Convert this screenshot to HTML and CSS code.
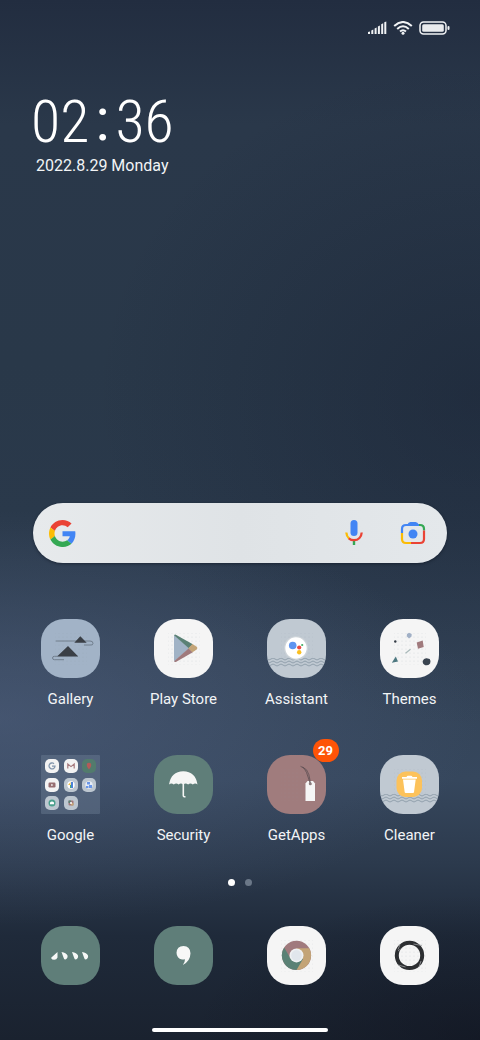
FILE: index.html
```
<!DOCTYPE html>
<html lang="en">
<head>
  <meta charset="UTF-8">
  <meta name="viewport" content="width=device-width, initial-scale=1">
  <title>Home Screen</title>
  <link rel="stylesheet" href="styles.css">
</head>
<body>

  <!-- shared patterns -->
  <svg class="defs" width="0" height="0" aria-hidden="true">
    <defs>
      <pattern id="dots" width="4" height="4" patternUnits="userSpaceOnUse">
        <circle cx="2" cy="2" r=".5" fill="#8d949c" opacity=".35"/>
      </pattern>
      <symbol id="waves" viewBox="0 0 59 10">
        <g fill="none" stroke="#8697a3" stroke-width=".8">
          <path d="M0 1q2 2 4 0t4 0 4 0 4 0 4 0 4 0 4 0 4 0 4 0 4 0 4 0 4 0 4 0 4 0 4 0"/>
          <path d="M0 4q2 2 4 0t4 0 4 0 4 0 4 0 4 0 4 0 4 0 4 0 4 0 4 0 4 0 4 0 4 0 4 0"/>
          <path d="M0 7q2 2 4 0t4 0 4 0 4 0 4 0 4 0 4 0 4 0 4 0 4 0 4 0 4 0 4 0 4 0 4 0"/>
        </g>
      </symbol>
    </defs>
  </svg>

  <div class="screen">
    <header class="status-bar">
      <svg width="19" height="14" viewBox="0 0 19 14" fill="#f1f3f5">
        <path d="M0 13v-2l2-.6V13zM3.300 13V9.500l2-.9V13zM6.600 13V7.600l2-1V13zM9.900 13V5.500l2-1V13zM13.200 13V3.200l2-1V13zM16.300 13V1.200l2-.7V13z"/>
      </svg>
      <svg width="20" height="14" viewBox="0 0 20 14" fill="none" stroke="#f1f3f5" stroke-width="2">
        <path d="M1.200 5Q10-3 18.800 5M4.200 8Q10 2.600 15.800 8M7 10.600q3-2.600 6 0"/>
        <circle cx="10" cy="12.300" r="1.500" fill="#f1f3f5" stroke="none"/>
      </svg>
      <svg width="31" height="14" viewBox="0 0 31 14">
        <rect x="1" y="1" width="26" height="12" rx="3.500" fill="none" stroke="#f1f3f5" stroke-width="1.500"/>
        <rect x="3.200" y="3.200" width="21.600" height="7.600" rx="1.500" fill="#e9ebed"/>
        <rect x="28.500" y="5" width="2" height="4" rx="1" fill="#f1f3f5"/>
      </svg>
    </header>

    <section class="clock">
      <div class="time"><span>02</span><span class="colon">:</span><span>36</span></div>
      <div class="date">2022.8.29 Monday</div>
    </section>

    <form class="search">
      <svg width="27" height="27" viewBox="2 2 44 44">
        <path fill="#ea4335" d="M24 9.500c3.540 0 6.710 1.220 9.210 3.600l6.850-6.850C35.900 2.380 30.470 0 24 0 14.620 0 6.510 5.380 2.560 13.220l7.980 6.190C12.430 13.720 17.740 9.500 24 9.500z" transform="translate(2 2) scale(.917)"/>
        <path fill="#4285f4" d="M46.980 24.550c0-1.570-.15-3.090-.38-4.550H24v9.020h12.940c-.58 2.960-2.260 5.480-4.780 7.180l7.730 6c4.510-4.180 7.090-10.360 7.090-17.650z" transform="translate(2 2) scale(.917)"/>
        <path fill="#fbbc05" d="M10.530 28.590c-.48-1.450-.76-2.990-.76-4.590s.27-3.140.76-4.590l-7.980-6.190C.92 16.460 0 20.120 0 24s.92 7.540 2.560 10.780z" transform="translate(2 2) scale(.917)"/>
        <path fill="#34a853" d="M24 48c6.480 0 11.930-2.130 15.890-5.810l-7.730-6c-2.150 1.450-4.920 2.300-8.160 2.300-6.260 0-11.570-4.220-13.470-9.910l-7.980 6.190C6.510 42.620 14.620 48 24 48z" transform="translate(2 2) scale(.917)"/>
      </svg>
      <input type="text" aria-label="Search">
      <button type="button" aria-label="Voice search">
        <svg width="18" height="26" viewBox="0 0 18 26">
          <rect x="5.500" y="0" width="7" height="16" rx="3.500" fill="#4285f4"/>
          <rect x="7.800" y="20" width="2.400" height="5" fill="#34a853"/>
          <path d="M1.300 12.500q.3 3.900 2.800 6" fill="none" stroke="#fbbc05" stroke-width="2.300"/>
          <path d="M3.800 18.300Q6 20.200 9 20.200c4.500 0 7.400-3.200 7.700-7.700" fill="none" stroke="#ea4335" stroke-width="2.300"/>
        </svg>
      </button>
      <button type="button" class="lens" aria-label="Camera search">
        <svg width="26" height="24" viewBox="0 0 26 24" fill="none" stroke-width="2.200">
          <path d="M2 12V8q0-4 4-4h14" stroke="#4285f4"/>
          <path d="M7 4Q8.500 1 10.500 1h5Q17.500 1 19 4z" fill="#4285f4"/>
          <path d="M19 4h1q4 0 4 4v1.500" stroke="#34a853"/>
          <path d="M24 9.500V18q0 4-4 4H11" stroke="#ea4335"/>
          <path d="M11 22H6q-4 0-4-4v-6" stroke="#fbbc05"/>
          <circle cx="13" cy="13" r="4.500" fill="#4285f4"/>
        </svg>
      </button>
    </form>

    <main class="apps">
      <a class="app" href="#">
        <svg class="icon blue" viewBox="0 0 59 59">
          <rect x="14" y="14" width="32" height="32" fill="url(#dots)"/>
          <path d="M14.700 22H49q3 0 3 2.300T49 26h-6M37 37.300H13.500q-2 0-2 1.700t2 1.700H23" fill="none" stroke="#64717f" stroke-width=".8"/>
          <path d="M27 27 16.300 37.300H37zM39.300 17.300l-6 6.400h12.400z" fill="#3a3f46"/>
        </svg>
        <span>Gallery</span>
      </a>
      <a class="app" href="#">
        <svg class="icon white" viewBox="0 0 59 59">
          <rect x="14" y="14" width="32" height="32" fill="url(#dots)"/>
          <path d="M20 16v26.500l15.500-13.300z" fill="#a1b3c6"/>
          <path d="M20 16.300q.8-1.200 2.300-.4l16.500 9.300-4 4z" fill="#5a8175"/>
          <path d="M20 42.300q.8 1.200 2.300.4l16.500-9.500-4-4z" fill="#a07a7d"/>
          <path d="m38.500 25 4.200 2.700q1.500 1.300 0 2.800l-4.200 2.800-4.200-4.100z" fill="#c3a477"/>
        </svg>
        <span>Play Store</span>
      </a>
      <a class="app" href="#">
        <svg class="icon gray" viewBox="0 0 59 59">
          <rect x="14" y="14" width="32" height="32" fill="url(#dots)"/>
          <use href="#waves" x="0" y="39" width="59" height="10"/>
          <circle cx="29" cy="29" r="12" fill="#d5dade" opacity=".6"/>
          <circle cx="29" cy="29" r="10.700" fill="#fff"/>
          <circle cx="25.700" cy="26.500" r="3.800" fill="#5d94f1"/>
          <circle cx="32.200" cy="28.500" r="2.100" fill="#ea4a40"/>
          <circle cx="35.200" cy="26" r="1.100" fill="#3fae63"/>
          <circle cx="32.200" cy="33.200" r="2.200" fill="#fbbf20"/>
        </svg>
        <span>Assistant</span>
      </a>
      <a class="app" href="#">
        <svg class="icon white" viewBox="0 0 59 59">
          <rect x="14" y="14" width="32" height="32" fill="url(#dots)"/>
          <path d="m29 13.700 2.700 1.300-.2 2.500-2.500 2-2.300-2.200.3-2.300z" fill="#a1b0c6"/>
          <circle cx="15.300" cy="22.500" r="1.200" fill="#343c46"/>
          <path d="m36.700 23.500 6-2 1 6.500-5.700 1.700z" fill="#a07a7d"/>
          <path d="m25.500 34.300 5-4" stroke="#a9b9b9" stroke-width="1.200"/>
          <path d="m15.800 37.500-4 6.200 6.200-1.200z" fill="#4d7880"/>
          <path d="M42.700 42q1-3 4-2.700l3 .8q1.500 2 .4 4.300-2 2.500-4.800 1.800-2.800-1-2.600-4.200z" fill="#3a4450"/>
        </svg>
        <span>Themes</span>
      </a>

      <a class="app" href="#">
        <svg class="icon folder" viewBox="0 0 59 59">
          <g fill="#f3f3f3">
            <rect x="4" y="4" width="14" height="14" rx="5"/>
            <rect x="23" y="4" width="14" height="14" rx="5"/>
            <rect x="4" y="23" width="14" height="14" rx="5"/>
          </g>
          <rect x="41" y="4" width="14" height="14" rx="5" fill="#527b6d"/>
          <g fill="#bdc7d0">
            <rect x="23" y="23" width="14" height="14" rx="5"/>
            <rect x="41" y="23" width="14" height="14" rx="5"/>
            <rect x="4" y="41" width="14" height="14" rx="5"/>
            <rect x="23" y="41" width="14" height="14" rx="5"/>
          </g>
          <path d="M13 8.700a3 3 0 1 0 1 2.500h-3" fill="none" stroke="#8296ad" stroke-width="1.300"/>
          <path d="M26.800 13.500V9l3.200 2.600L33.200 9v4.500" fill="none" stroke="#a5797c" stroke-width="1.200"/>
          <path d="M48 14.500q-2.300-3-2.300-4.500a2.300 2.300 0 0 1 4.600 0q0 1.500-2.300 4.500z" fill="#b35a59"/>
          <rect x="7.500" y="27.500" width="7" height="5" rx="1.200" fill="#966d70"/>
          <path d="m10.300 28.700 2 1.300-2 1.300z" fill="#fff"/>
          <circle cx="30" cy="30" r="3.700" fill="#fff"/>
          <path d="M29.500 27v3H27z" fill="#f3c046"/>
          <path d="M30 27h2v6h-2z" fill="#4b83d8"/>
          <path d="M29 30h1v3h-1z" fill="#52a96c"/>
          <circle cx="48" cy="30" r="3.700" fill="#e7edf5"/>
          <path d="M46 27h3v2.500h-3zM48 30h3v3h-3zM45 31h2.500v2H45z" fill="#6a97e8"/>
          <circle cx="11" cy="48" r="3.500" fill="#4ba08d"/>
          <path d="M9 47.500q2-2 4 0v1.700H9z" fill="#fff"/>
          <rect x="27.500" y="45.500" width="5" height="5" rx="1" fill="#a07a7d"/>
          <path d="M27.500 45.500H30V48h-2.500z" fill="#5a8175"/>
          <path d="M30 48h2.500v2.500H30z" fill="#c3a477"/>
          <circle cx="30" cy="48" r="1" fill="#fff"/>
        </svg>
        <span>Google</span>
      </a>
      <a class="app" href="#">
        <svg class="icon green" viewBox="0 0 59 59">
          <path d="M15 29.500Q17 16.500 29.300 16.200 41.500 16.500 43.500 29.500q-2.300-1.800-4.700 0-2.400-1.800-4.700 0-2.400-1.800-4.800 0-2.400-1.800-4.700 0-2.400-1.800-4.800 0-2.400-1.800-4.800 0z" fill="#f5f6f5"/>
          <path d="M29.300 28v12.500q0 1.500 2.200 1.300" fill="none" stroke="#f5f6f5" stroke-width="1.600"/>
        </svg>
        <span>Security</span>
      </a>
      <a class="app" href="#">
        <svg class="icon mauve" viewBox="0 0 59 59">
          <rect x="14" y="14" width="32" height="32" fill="url(#dots)" opacity=".5"/>
          <path d="m40.500 26-2 2.500V46h9.500V28.500l-2-2.500z" fill="#f5f5f5"/>
          <circle cx="43.300" cy="28.700" r="1.500" fill="#8b7b7d"/>
          <path d="M33.500 11.300q4 .7 6 6.200t3.500 10.500M35.500 12q5 2 6.300 7.500t1.500 8" fill="none" stroke="#54494d" stroke-width=".7"/>
        </svg>
        <b class="badge">29</b>
        <span>GetApps</span>
      </a>
      <a class="app" href="#">
        <svg class="icon gray" viewBox="0 0 59 59">
          <rect x="14" y="14" width="32" height="32" fill="url(#dots)"/>
          <use href="#waves" x="0" y="39" width="59" height="10"/>
          <rect x="16.500" y="16.500" width="25.500" height="25.500" rx="9" fill="#fcc25b"/>
          <path d="m23 24.500 1.700 12.800q.2.700 1 .7h7.300q.8 0 1-.7l1.700-12.800zM22 22h4.500q.5-1.300 1.500-1.300h3q1 0 1.500 1.300H37v1.700H22z" fill="#fff"/>
        </svg>
        <span>Cleaner</span>
      </a>
    </main>

    <nav class="pages">
      <button type="button" class="active" aria-label="Page 1"></button>
      <button type="button" aria-label="Page 2"></button>
    </nav>

    <footer class="dock">
      <a href="#" aria-label="Phone">
        <svg class="icon green" viewBox="0 0 59 59" fill="#f7f8f7">
          <path d="M16.500 26v5.500q-.8 2.300-3.300 2.300-2.300 0-3-1.500 0-1.200 1.300-1.800z"/>
          <path id="drop" d="M20.500 26q4.700.6 6 3.500.6 2.600-2 4-1.500 0-1.800-1.500z"/>
          <use href="#drop" x="10.500"/>
          <use href="#drop" x="20.500"/>
        </svg>
      </a>
      <a href="#" aria-label="Messages">
        <svg class="icon green" viewBox="0 0 59 59">
          <path d="M29.500 20q6.700.2 7 7.300-.2 8-7.700 11.700 2.200-2.700 2.200-5.800-1.500.5-3 .3-5.300-1-5.500-6.700.3-6.600 7-6.800z" fill="#f7f8f7"/>
        </svg>
      </a>
      <a href="#" aria-label="Browser">
        <svg class="icon white" viewBox="0 0 59 59">
          <rect x="14" y="14" width="32" height="32" fill="url(#dots)"/>
          <circle cx="29.500" cy="29.400" r="14.600" fill="#a07a7d"/>
          <path d="M42.200 22.200A14.600 14.600 0 0 1 29.500 44V22.200z" fill="#c3a477"/>
          <path d="M17.200 21.600A14.600 14.600 0 0 0 29.500 44l6.500-11-6.500-3.600-6 3z" fill="#5a8175"/>
          <circle cx="29.500" cy="29.400" r="7" fill="#eff1f3"/>
          <circle cx="29.500" cy="29.400" r="5.300" fill="#e1e6ec"/>
        </svg>
      </a>
      <a href="#" aria-label="Camera">
        <svg class="icon white" viewBox="0 0 59 59">
          <rect x="14" y="14" width="32" height="32" fill="url(#dots)"/>
          <circle cx="29.500" cy="29.400" r="12.700" fill="none" stroke="#2c2e31" stroke-width="4"/>
          <path d="m18 23.500 2-5M33.500 18l8.500 1.500M41 35l-2 6M25.500 41l-7.500-2M18 25l2.500-2" stroke="#9a9da0" stroke-width=".8"/>
        </svg>
      </a>
    </footer>

    <div class="home-bar"></div>
  </div>

</body>
</html>
```
FILE: styles.css
```
* {
  box-sizing: border-box;
}
body {
  margin: 0;
  font-family: Roboto, "Liberation Sans", sans-serif;
  color: #f2f4f6;
}
.defs {
  position: absolute;
}
.screen {
  display: flex;
  flex-direction: column;
  min-height: 100vh;
  padding: 20px 14px 8px;
  background:
    radial-gradient(ellipse 100% 20% at 0% 69%, rgba(88, 104, 138, 0.45), transparent),
    radial-gradient(ellipse 80% 32% at 100% 38%, rgba(20, 28, 46, 0.4), transparent),
    radial-gradient(ellipse 60% 14% at 100% 100%, rgba(14, 17, 28, 0.5), transparent),
    linear-gradient(#222d40 0%, #2a384a 12%, #293849 35%, #2a394b 50%, #334357 64%, #36475d 75%, #2c3a4d 83%, #1f2a3a 90%, #1a222f 100%);
}
.status-bar {
  display: flex;
  justify-content: flex-end;
  align-items: center;
  gap: 6px;
  height: 16px;
  padding-right: 16px;
}
.clock {
  margin-top: 54px;
  padding-left: 17px;
}
.time {
  display: flex;
  font-family: "Roboto Condensed", Roboto, sans-serif;
  font-size: 60px;
  font-weight: 300;
  line-height: 64px;
  color: #fff;
}
.colon {
  padding: 0 6px;
  font-weight: 400;
  line-height: 60px;
}
.date {
  padding-left: 5px;
  font-size: 16px;
  line-height: 24px;
}
.search {
  display: flex;
  align-items: center;
  height: 60px;
  margin: auto 19px 0;
  padding: 0 21px 0 16px;
  border-radius: 30px;
  background: linear-gradient(90deg, #e7eaec, #dfe3e6 50%, #e4e8eb);
  box-shadow: 0 1px 3px rgba(10, 16, 28, 0.5);
}
.search input {
  flex: 1;
  min-width: 0;
  border: 0;
  outline: 0;
  background: none;
  font: inherit;
}
button {
  padding: 0;
  border: 0;
  background: none;
  cursor: pointer;
}
.search svg {
  display: block;
}
.lens {
  margin-left: 37px;
}
.apps {
  display: grid;
  grid-template-columns: repeat(4, 1fr);
  row-gap: 44px;
  margin-top: 56px;
}
.app {
  position: relative;
  display: flex;
  flex-direction: column;
  align-items: center;
  gap: 10px;
  font-size: 15px;
  line-height: 23px;
  color: inherit;
  text-decoration: none;
}
.icon {
  display: block;
  width: 59px;
  height: 59px;
  border-radius: 23px;
}
.blue {
  background: #a2b3c7;
}
.white {
  background: #f5f5f5;
}
.gray {
  background: #c0c9d2;
}
.green {
  background: #5f7e79;
}
.mauve {
  background: #a07c7d;
}
.folder {
  border-radius: 1px;
  background: rgba(115, 133, 155, 0.4);
}
.badge {
  position: absolute;
  top: -16px;
  left: calc(50% + 16px);
  width: 26px;
  border-radius: 12px;
  background: #fe5407;
  color: #fff;
  font-size: 13px;
  line-height: 23px;
  text-align: center;
}
.pages {
  display: flex;
  justify-content: center;
  gap: 10px;
  margin-top: 32px;
}
.pages button {
  width: 7px;
  height: 7px;
  border-radius: 50%;
  background: #6b7888;
}
.pages .active {
  background: #fff;
}
.dock {
  display: grid;
  grid-template-columns: repeat(4, 1fr);
  justify-items: center;
  margin-top: 40px;
}
.home-bar {
  align-self: center;
  width: 39%;
  height: 4px;
  margin-top: 43px;
  border-radius: 2px;
  background: #fff;
}
```
